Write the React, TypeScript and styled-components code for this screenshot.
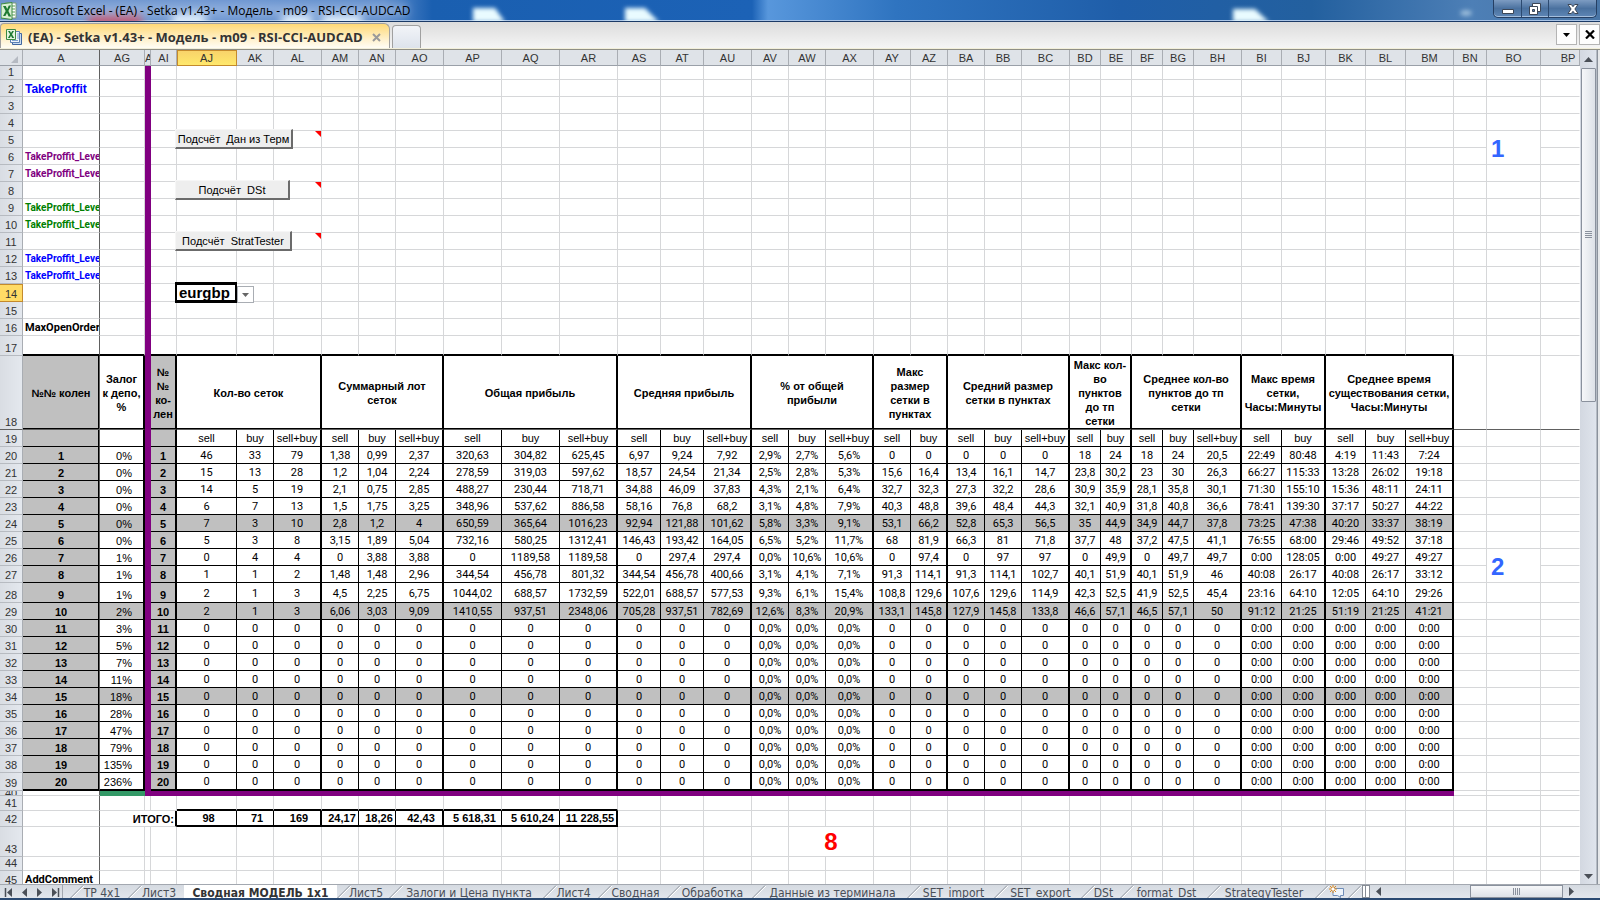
import React from 'react';
import styled, { createGlobalStyle, css } from 'styled-components';

const INK = '#000000';
const GRID = '#d6d7d9';
const GREY = '#c0c0c0';
const PURPLE = '#800080';
const FREEZE = '#606060';
const BLUE = '#0000ff';

const GlobalStyle = createGlobalStyle`
  html, body { margin: 0; height: 100%; overflow: hidden; }
  * { box-sizing: border-box; }
  body { font: 11px/14px "Liberation Sans", Arial, sans-serif; color: #000; background: #fff; }
  button, select { font: inherit; color: inherit; padding: 0; margin: 0; }
`;

const Window = styled.div`
  display: flex;
  flex-direction: column;
  height: 100vh;
  border-bottom: 2px solid #2b4a72;
`;

/* ---------- window title ---------- */

const TitleBar = styled.header`
  position: relative;
  display: flex;
  flex: none;
  align-items: center;
  height: 22px;
  padding: 0 3px 0 1px;
  overflow: hidden;
  border-bottom: 1px solid #1b3a66;
  box-shadow: inset 0 -1px 0 #a9c4e6;
  background: linear-gradient(90deg, #6f95cc 0%, #6b94d0 14%, #5f8dcc 24%, #1a5fb0 27%, #1c62b6 47%,
    #5897dc 48%, #2f74c0 56%, #1f5ea9 70%, #23609f 82%, #4d7fb6 92%, #4875a6 100%);
`;

const Backdrop = styled.svg`
  position: absolute;
  inset: 0;
  width: 100%;
  height: 100%;
`;

const Title = styled.h1`
  position: relative;
  flex: 1;
  margin: 0 0 0 4px;
  font: 400 12px/20px "Open Sans", "Segoe UI", sans-serif;
  white-space: nowrap;
`;

const Logo = styled.svg`
  position: relative;
  flex: none;
`;

const Caption = styled.div`
  position: relative;
  display: flex;
  align-self: flex-start;
  height: 18px;
  border: 1px solid #253f63;
  border-top: 0;
  border-radius: 0 0 5px 5px;
  background: linear-gradient(#7d9cc2, #4a719f 50%, #5e87b6);
  box-shadow: inset 0 -1px 0 #a5bfdd;
`;

const CaptionButton = styled.button<{ $w: number }>`
  display: grid;
  place-items: center;
  width: ${(p) => p.$w}px;
  border: 0;
  border-right: 1px solid #2c4a70;
  background: none;
  &:last-child { border-right: 0; }
`;

/* ---------- document tabs ---------- */

const DocStrip = styled.div`
  display: flex;
  flex: none;
  align-items: flex-end;
  height: 28px;
  padding-bottom: 1px;
  border-bottom: 1px solid #8f8f86;
  background: linear-gradient(#dcdcdc, #f6f6f6);
  box-shadow: inset 0 -1px 0 #f2efda;
`;

const DocTab = styled.div`
  display: flex;
  align-items: center;
  height: 25px;
  width: 390px;
  padding: 2px 0 0 5px;
  border: 1px solid #a0a0a0;
  border-bottom: 0;
  border-radius: 4px 6px 0 0;
  background: linear-gradient(#ffd976, #fff3d4 70%, #fffdf5);
`;

const DocName = styled.span`
  flex: 1;
  margin-left: 6px;
  font: 700 13px/20px "Open Sans", "Segoe UI", sans-serif;
  color: #333;
  white-space: nowrap;
`;

const TabClose = styled.button`
  display: grid;
  place-items: center;
  width: 14px;
  height: 14px;
  margin-right: 6px;
  border: 0;
  background: none;
`;

const BlankTab = styled.button`
  width: 29px;
  height: 23px;
  margin-left: 2px;
  border: 1px solid #a0a0a0;
  border-bottom: 0;
  border-radius: 4px 4px 0 0;
  background: linear-gradient(#f2f4f8, #dde3ec);
`;

const StripTools = styled.div`
  display: flex;
  gap: 2px;
  margin: 0 0 3px auto;
`;

const StripButton = styled.button`
  display: grid;
  place-items: center;
  width: 21px;
  height: 21px;
  border: 1px solid #b4b4b4;
  background: #fdfdfd;
`;

/* ---------- sheet ---------- */

const Body = styled.main`
  display: flex;
  flex: 1;
  min-height: 0;
`;

const SheetPane = styled.div`
  flex: 1;
  min-width: 0;
  overflow: hidden;
`;

const Sheet = styled.table`
  width: 100%;
  table-layout: fixed;
  border-collapse: separate;
  border-spacing: 0;
`;

const Row = styled.tr<{ $h: number }>`
  height: ${(p) => p.$h}px;
  line-height: ${(p) => (p.$h < 15 ? 13 : 14)}px;
`;

const ColHead = styled.th<{ $on?: boolean; $freeze?: boolean; $clip?: boolean; $last?: boolean }>`
  height: 16px;
  padding: 0 0 0 ${(p) => (p.$last ? 16 : 0)}px;
  overflow: hidden;
  font-weight: 400;
  line-height: 14px;
  color: #333;
  text-align: ${(p) => (p.$clip ? 'left' : 'center')};
  white-space: nowrap;
  border-right: 1px solid ${(p) => (p.$freeze ? FREEZE : '#a9adb3')};
  border-bottom: 1px solid #9aa0a8;
  background: #dfe3e8;
  ${(p) =>
    p.$on &&
    css`
      border-color: #c48a2c;
      box-shadow: inset 0 1px 0 #c48a2c, inset 1px 0 0 #c48a2c;
      background: linear-gradient(#f8d26a, #ffe86c);
    `}
`;

const RowHead = styled.th<{ $on?: boolean; $freeze?: boolean }>`
  padding: 0;
  font-weight: 400;
  vertical-align: bottom;
  color: #333;
  border-right: 1px solid #a9adb3;
  border-bottom: 1px solid ${(p) => (p.$freeze ? FREEZE : '#b7bbc1')};
  background: ${(p) => (p.$on ? '#ffdb66' : 'linear-gradient(90deg, #d9dde3, #e4e8ee)')};
  ${(p) => p.$on && css`border-color: #c48a2c; box-shadow: inset 0 1px 0 #c48a2c;`}
`;

const ShortLabel = styled.span`
  display: flex;
  align-items: center;
  justify-content: center;
  height: 4px;
  overflow: hidden;
`;

type Edge = 'grid' | 'thin' | 'thick' | 'none' | 'freeze' | 'purple';

const edge = (e: Edge, fill?: string) =>
  ({
    grid: `1px solid ${GRID}`,
    thin: `1px solid ${INK}`,
    thick: `2px solid ${INK}`,
    none: `1px solid ${fill ?? '#fff'}`,
    freeze: `1px solid ${FREEZE}`,
    purple: `1px solid ${PURPLE}`,
  })[e];

interface CellProps {
  $r?: Edge;
  $b?: Edge;
  $fill?: string;
  $bold?: boolean;
  $align?: string;
  $low?: boolean;
  $color?: string;
  $pad?: string;
  $inner?: string;
  $over?: boolean;
  $note?: boolean;
  $num?: boolean;
}

const Cell = styled.td<CellProps>`
  position: ${(p) => (p.$over || p.$note ? 'relative' : 'static')};
  padding: ${(p) => p.$pad ?? (p.$num ? '2px 0 0' : '0')};
  overflow: ${(p) => (p.$over ? 'visible' : 'hidden')};
  white-space: nowrap;
  font-weight: ${(p) => (p.$bold ? 700 : 400)};
  font-family: ${(p) => (p.$num ? 'Roboto, sans-serif' : 'inherit')};
  text-align: ${(p) => p.$align ?? 'center'};
  vertical-align: ${(p) => (p.$low ? 'bottom' : 'middle')};
  color: ${(p) => p.$color ?? INK};
  background: ${(p) => p.$fill ?? '#fff'};
  border-right: ${(p) => edge(p.$r ?? 'grid', p.$fill)};
  border-bottom: ${(p) => edge(p.$b ?? 'grid', p.$fill)};
  box-shadow: ${(p) => p.$inner ?? 'none'};
  ${(p) =>
    p.$note &&
    css`
      &::after {
        content: '';
        position: absolute;
        top: 0;
        right: 0;
        border-top: 6px solid #f00;
        border-left: 6px solid transparent;
      }
    `}
`;

const ParamName = styled.span<{ $size: number }>`
  display: block;
  font-family: ${(p) => (p.$size === 12 ? 'inherit' : 'Roboto, sans-serif')};
  font-size: ${(p) => p.$size}px;
`;

const BigMark = styled.strong`
  display: block;
  font-size: 24px;
  line-height: 26px;
`;

const SheetButton = styled.button<{ $w: number }>`
  position: absolute;
  z-index: 1;
  top: -2px;
  left: -2px;
  width: ${(p) => p.$w}px;
  height: 20px;
  border: solid;
  border-width: 1px 2px 2px 1px;
  border-color: #f6f6f6 #6b6b6b #6b6b6b #f6f6f6;
  background: #eeeeee;
  white-space: pre;
`;

const Picker = styled.label`
  position: absolute;
  z-index: 1;
  top: -2px;
  left: -2px;
  display: flex;
  align-items: flex-end;
`;

const PickerSelect = styled.select`
  appearance: none;
  width: 62px;
  height: 21px;
  padding: 0 0 0 2px;
  border: 3px solid #000;
  border-width: 3px 2px;
  border-radius: 0;
  outline: 0;
  background: #fff;
  font: 700 15px/15px "Liberation Sans", sans-serif;
`;

const PickerArrow = styled.svg`
  border: 1px solid #a9adb3;
  background: #fff;
`;

/* ---------- scroll bars ---------- */

const VBar = styled.div`
  display: flex;
  flex: none;
  flex-direction: column;
  align-items: center;
  width: 20px;
  padding-right: 4px;
  background: linear-gradient(90deg, #d3d8e1, #dfe4ec 16px, #8b929c 17px, #8b929c 18px, #e6e8ea 18px);
`;

const ScrollArrow = styled.button<{ $w: number; $h: number; $end?: number }>`
  display: grid;
  flex: none;
  place-items: center;
  width: ${(p) => p.$w}px;
  height: ${(p) => p.$h}px;
  margin-right: ${(p) => p.$end ?? 0}px;
  border: 0;
  background: none;
`;

const VThumb = styled.div`
  display: grid;
  place-items: center;
  width: 15px;
  height: 40%;
  border: 1px solid #8a919d;
  border-radius: 1px;
  background: linear-gradient(90deg, #f6f7f9, #dde1e7);
`;

const Track = styled.div`
  flex: 1;
`;

/* ---------- sheet tabs ---------- */

const TabBar = styled.footer`
  display: flex;
  flex: none;
  height: 14px;
  overflow: hidden;
  border-top: 1px solid #a3a8b0;
  background: linear-gradient(#d5dae1, #e2e6ec);
`;

const TabNav = styled.nav`
  display: flex;
  width: 63px;
  padding-left: 2px;
  border-right: 1px solid #a3a8b0;
`;

const TabList = styled.div`
  display: flex;
  padding-left: 7px;
`;

const SheetTab = styled.button<{ $w: number; $on?: boolean }>`
  display: flex;
  flex: none;
  width: ${(p) => p.$w}px;
  height: 13px;
  border: 0;
  overflow: hidden;
  background: ${(p) => (p.$on ? '#fff' : 'none')};
  color: ${(p) => (p.$on ? '#333' : '#4a4f57')};
  font: ${(p) => (p.$on ? 700 : 400)} 12px/16px "DejaVu Sans Condensed", Tahoma, sans-serif;
  white-space: nowrap;
`;

const TabText = styled.span<{ $on: boolean }>`
  flex: 1;
  margin-left: ${(p) => (p.$on ? 0 : -8)}px;
  text-align: center;
`;

const HBar = styled.div`
  display: flex;
  flex: 1;
  align-items: stretch;
`;

const Splitter = styled.span`
  width: 8px;
  border: 1px solid #868c95;
  background: #fff;
  box-shadow: inset 2px 0 0 #fff, inset 3px 0 0 #868c95;
`;

const HThumb = styled.div`
  display: grid;
  place-items: center;
  width: 93px;
  margin-left: auto;
  border: 1px solid #8a919d;
  background: linear-gradient(#f6f7f9, #dde1e7);
`;

/* ---------- data ---------- */

const columns: [string, number][] = [
  ['A', 77], ['AG', 45], ['AH', 6], ['AI', 26],
  ['AJ', 60], ['AK', 37], ['AL', 48], ['AM', 37], ['AN', 37], ['AO', 48],
  ['AP', 58], ['AQ', 58], ['AR', 58], ['AS', 43], ['AT', 43], ['AU', 48],
  ['AV', 37], ['AW', 37], ['AX', 48], ['AY', 37], ['AZ', 37],
  ['BA', 37], ['BB', 37], ['BC', 48], ['BD', 31], ['BE', 31],
  ['BF', 31], ['BG', 31], ['BH', 48], ['BI', 40], ['BJ', 44],
  ['BK', 40], ['BL', 40], ['BM', 48], ['BN', 33], ['BO', 54], ['BP', 0],
];

const groups: { lines: string[]; span: number }[] = [
  { lines: ['Кол-во сеток'], span: 3 },
  { lines: ['Суммарный лот', 'сеток'], span: 3 },
  { lines: ['Общая прибыль'], span: 3 },
  { lines: ['Средняя прибыль'], span: 3 },
  { lines: ['% от общей', 'прибыли'], span: 3 },
  { lines: ['Макс', 'размер', 'сетки в', 'пунктах'], span: 2 },
  { lines: ['Средний размер', 'сетки в пунктах'], span: 3 },
  { lines: ['Макс кол-', 'во', 'пунктов', 'до тп', 'сетки'], span: 2 },
  { lines: ['Среднее кол-во', 'пунктов до тп', 'сетки'], span: 3 },
  { lines: ['Макс время', 'сетки,', 'Часы:Минуты'], span: 2 },
  { lines: ['Среднее время', 'существования сетки,', 'Часы:Минуты'], span: 3 },
];

const sides = groups.flatMap((g) => (g.span === 3 ? ['sell', 'buy', 'sell+buy'] : ['sell', 'buy']));
const groupEnd = groups.flatMap((g) => Array.from({ length: g.span }, (_, i) => i === g.span - 1));

const filled = [
  '46 33 79 1,38 0,99 2,37 320,63 304,82 625,45 6,97 9,24 7,92 2,9% 2,7% 5,6% 0 0 0 0 0 18 24 18 24 20,5 22:49 80:48 4:19 11:43 7:24',
  '15 13 28 1,2 1,04 2,24 278,59 319,03 597,62 18,57 24,54 21,34 2,5% 2,8% 5,3% 15,6 16,4 13,4 16,1 14,7 23,8 30,2 23 30 26,3 66:27 115:33 13:28 26:02 19:18',
  '14 5 19 2,1 0,75 2,85 488,27 230,44 718,71 34,88 46,09 37,83 4,3% 2,1% 6,4% 32,7 32,3 27,3 32,2 28,6 30,9 35,9 28,1 35,8 30,1 71:30 155:10 15:36 48:11 24:11',
  '6 7 13 1,5 1,75 3,25 348,96 537,62 886,58 58,16 76,8 68,2 3,1% 4,8% 7,9% 40,3 48,8 39,6 48,4 44,3 32,1 40,9 31,8 40,8 36,6 78:41 139:30 37:17 50:27 44:22',
  '7 3 10 2,8 1,2 4 650,59 365,64 1016,23 92,94 121,88 101,62 5,8% 3,3% 9,1% 53,1 66,2 52,8 65,3 56,5 35 44,9 34,9 44,7 37,8 73:25 47:38 40:20 33:37 38:19',
  '5 3 8 3,15 1,89 5,04 732,16 580,25 1312,41 146,43 193,42 164,05 6,5% 5,2% 11,7% 68 81,9 66,3 81 71,8 37,7 48 37,2 47,5 41,1 76:55 68:00 29:46 49:52 37:18',
  '0 4 4 0 3,88 3,88 0 1189,58 1189,58 0 297,4 297,4 0,0% 10,6% 10,6% 0 97,4 0 97 97 0 49,9 0 49,7 49,7 0:00 128:05 0:00 49:27 49:27',
  '1 1 2 1,48 1,48 2,96 344,54 456,78 801,32 344,54 456,78 400,66 3,1% 4,1% 7,1% 91,3 114,1 91,3 114,1 102,7 40,1 51,9 40,1 51,9 46 40:08 26:17 40:08 26:17 33:12',
  '2 1 3 4,5 2,25 6,75 1044,02 688,57 1732,59 522,01 688,57 577,53 9,3% 6,1% 15,4% 108,8 129,6 107,6 129,6 114,9 42,3 52,5 41,9 52,5 45,4 23:16 64:10 12:05 64:10 29:26',
  '2 1 3 6,06 3,03 9,09 1410,55 937,51 2348,06 705,28 937,51 782,69 12,6% 8,3% 20,9% 133,1 145,8 127,9 145,8 133,8 46,6 57,1 46,5 57,1 50 91:12 21:25 51:19 21:25 41:21',
];
const blank =
  '0 0 0 0 0 0 0 0 0 0 0 0 0,0% 0,0% 0,0% 0 0 0 0 0 0 0 0 0 0 0:00 0:00 0:00 0:00 0:00';
const deposit = [0, 0, 0, 0, 0, 0, 1, 1, 1, 2, 3, 5, 7, 11, 18, 28, 47, 79, 135, 236];
const levels = deposit.map((d, i) => ({
  no: i + 1,
  deposit: d,
  values: (filled[i] ?? blank).split(' '),
}));
const totals = ['98', '71', '169', '24,17', '18,26', '42,43', '5 618,31', '5 610,24', '11 228,55'];

const params: Record<number, { text: string; color: string; size: number }> = {
  2: { text: 'TakeProffit', color: BLUE, size: 12 },
  6: { text: 'TakeProffit_Leve', color: PURPLE, size: 10 },
  7: { text: 'TakeProffit_Leve', color: PURPLE, size: 10 },
  9: { text: 'TakeProffit_Leve', color: '#008000', size: 10 },
  10: { text: 'TakeProffit_Leve', color: '#008000', size: 10 },
  12: { text: 'TakeProffit_Leve', color: BLUE, size: 10 },
  13: { text: 'TakeProffit_Leve', color: BLUE, size: 10 },
  16: { text: 'MaxOpenOrder', color: INK, size: 11 },
  45: { text: 'AddComment', color: INK, size: 11 },
};
const macros: Record<number, { text: string; w: number }> = {
  5: { text: 'Подсчёт  Дан из Терм', w: 118 },
  8: { text: 'Подсчёт  DSt', w: 115 },
  11: { text: 'Подсчёт  StratTester', w: 117 },
};
const heights: Record<number, number> = {
  1: 14, 14: 18, 17: 20, 18: 74, 28: 20, 39: 18, 40: 5, 41: 15, 42: 15, 43: 30, 44: 14, 45: 17,
};
const heightOf = (n: number) => heights[n] ?? 17;

const sheetTabs: [string, number][] = [
  ['TP 4x1', 58], ['Лист3', 56], ['Сводная МОДЕЛЬ 1x1', 153], ['Лист5', 52],
  ['Залоги и Цена пункта', 154], ['Лист4', 55], ['Сводная', 69], ['Обработка', 85],
  ['Данные из терминала', 155], ['SET_import', 87], ['SET_export', 87], ['DSt', 39],
  ['format_Dst', 87], ['StrategyTester', 108],
];
const ACTIVE = 'Сводная МОДЕЛЬ 1x1';

/* ---------- pieces ---------- */

const Lines = ({ of }: { of: string[] }) => (
  <>
    {of.map((l, i) => (
      <React.Fragment key={i}>
        {i > 0 && <br />}
        {l}
      </React.Fragment>
    ))}
  </>
);

const ExcelLogo = () => (
  <Logo width="16" height="18" viewBox="0 0 16 18" aria-hidden="true">
    <path d="M4 1h11v15H4z" fill="#fff" stroke="#7b9c78" />
    <path d="M10 4h4M10 7h4M10 10h4M10 13h4" stroke="#8fc08a" strokeWidth="1.4" />
    <path d="M0 2l11-1.5v17L0 16z" fill="#d9efd3" stroke="#3d8a43" />
    <path d="M2 4h2.8l1.4 3 1.6-3.4H10L7.4 9l2.8 5.4H7.6L6 11l-1.6 3H2l2.7-5z" fill="#1f7a33" />
  </Logo>
);

const BookLogo = () => (
  <Logo width="16" height="16" viewBox="0 0 16 16" aria-hidden="true">
    <path d="M6.500 4.500h9v11h-9z" fill="#c9dcf2" stroke="#3f66a0" />
    <path d="M4.500 2.500h9v11h-9z" fill="#eef4fb" stroke="#5b7fb4" />
    <path d="M11 5h2M11 7h2M11 9h2M6 11.500h6" stroke="#7fa1cf" />
    <path d="M.5.5h9v10h-9z" fill="#e5f5e0" stroke="#3d8a43" />
    <path d="M2 2h2l1 2 1.200-2H8L6 5.300 8.200 9H6.100L5 6.800 3.800 9H1.900l2.200-3.700z" fill="#1f7a33" />
  </Logo>
);

const Tri = ({ dir, bar, color = '#4a4f57' }: { dir: 'up' | 'down' | 'left' | 'right'; bar?: boolean; color?: string }) => {
  const d = {
    up: 'M1 7h9L5.500 2z',
    down: 'M1 3h9L5.500 8z',
    left: 'M8 0v9L3 4.500z',
    right: 'M3 0v9l5-4.500z',
  }[dir];
  return (
    <svg width="11" height="9" viewBox="0 0 11 9" aria-hidden="true">
      <path d={d} fill={color} />
      {bar && <path d={dir === 'left' ? 'M1.500 0v9' : 'M9.500 0v9'} stroke={color} strokeWidth="1.500" />}
    </svg>
  );
};

const Slash = () => (
  <svg width="14" height="13" viewBox="0 0 14 13" aria-hidden="true">
    <path d="M0 13.500L13 .5" stroke="#8f959e" />
    <path d="M1.500 13.500L14 1" stroke="#fff" />
  </svg>
);

const totalIds = columns.slice(4, 13).map(([id]) => id);

/** Unbordered cells for a slice of the columns, with the controls that float over them. */
const plainCells = (n: number, from: number, to: number) =>
  columns.slice(from, to).map(([id]) => {
    if (id === 'AJ' && macros[n])
      return (
        <Cell key={id} $over>
          <SheetButton type="button" $w={macros[n].w}>{macros[n].text}</SheetButton>
        </Cell>
      );
    if (id === 'AJ' && n === 14)
      return (
        <Cell key={id} $over>
          <Picker>
            <PickerSelect defaultValue="eurgbp" aria-label="Symbol">
              <option>eurgbp</option>
            </PickerSelect>
            <PickerArrow width="17" height="17" viewBox="0 0 15 15" aria-hidden="true">
              <path d="M4 6h7l-3.500 4z" fill="#666" />
            </PickerArrow>
          </Picker>
        </Cell>
      );
    return (
      <Cell
        key={id}
        $note={id === 'AL' && n in macros}
        $b={n === 17 || (n === 41 && totalIds.includes(id)) ? 'thick' : 'grid'}
      />
    );
  });

/** Columns to the right of the table. */
const tail = (n: number) => {
  const b: Edge = n === 18 ? 'freeze' : 'grid';
  const mark = n === 5 ? '1' : n === 26 ? '2' : '';
  return (
    <>
      <Cell $b={b} />
      {mark ? (
        <Cell rowSpan={2} $align="left" $pad="2px 0 0 4px" $color="#3366ff">
          <BigMark>{mark}</BigMark>
        </Cell>
      ) : n === 6 || n === 27 ? null : (
        <Cell $b={b} />
      )}
      <Cell $b={b} $r="none" />
    </>
  );
};

const PlainRow = ({ n }: { n: number }) => {
  const p = params[n];
  const above = n < 18;
  return (
    <Row $h={heightOf(n)}>
      <RowHead scope="row" $on={n === 14}>{n}</RowHead>
      <Cell $r="freeze" $b={n === 17 ? 'thick' : 'grid'} $bold $low $align="left" $pad="0 0 0 2px" $color={p?.color}>
        {p && <ParamName $size={p.size}>{p.text}</ParamName>}
      </Cell>
      {n === 42 ? (
        <Cell colSpan={3} $bold $align="right" $pad="0 1px 0 0" $r="thick">ИТОГО:</Cell>
      ) : (
        <>
          <Cell $b={n === 17 ? 'thick' : 'grid'} />
          {above ? <Cell $fill={PURPLE} $r="purple" $b="purple" /> : <Cell />}
          <Cell $b={n === 17 ? 'thick' : 'grid'} />
        </>
      )}
      {n === 42 ? (
        <>
          {totals.map((t, i) => (
            <Cell key={i} $bold $pad="0 0 0 4px" $b="thick" $r={i % 3 === 2 ? 'thick' : 'thin'}>{t}</Cell>
          ))}
          {plainCells(n, 13, 34)}
        </>
      ) : n === 43 ? (
        <>
          {plainCells(n, 4, 17)}
          <Cell colSpan={2} $color="#ff0000"><BigMark>8</BigMark></Cell>
          {plainCells(n, 19, 34)}
        </>
      ) : (
        plainCells(n, 4, 34)
      )}
      {tail(n)}
    </Row>
  );
};

const GroupRow = () => (
  <Row $h={74}>
    <RowHead scope="row" $freeze>18</RowHead>
    <Cell $fill={GREY} $bold $r="freeze" $b="freeze" $inner={`inset -1px -1px 0 ${INK}`}>№№ колен</Cell>
    <Cell $bold $r="thick" $b="freeze" $inner={`inset 0 -1px 0 ${INK}`}><Lines of={['Залог', 'к депо,', '%']} /></Cell>
    <Cell $fill={PURPLE} $r="purple" $b="purple" />
    <Cell $fill={GREY} $bold $r="thick" $b="freeze" $inner={`inset 0 -1px 0 ${INK}`}><Lines of={['№', '№', 'ко-', 'лен']} /></Cell>
    {groups.map((g) => (
      <Cell key={g.lines.join()} colSpan={g.span} $bold $r="thick" $b="freeze" $inner={`inset 0 -1px 0 ${INK}`}>
        <Lines of={g.lines} />
      </Cell>
    ))}
    {tail(18)}
  </Row>
);

const SideRow = () => (
  <Row $h={17}>
    <RowHead scope="row">19</RowHead>
    <Cell $fill={GREY} $r="freeze" $b="thin" $inner={`inset -1px 0 0 ${INK}`} />
    <Cell $r="thick" $b="thin" />
    <Cell $fill={PURPLE} $r="purple" $b="purple" />
    <Cell $fill={GREY} $r="thick" $b="thin" />
    {sides.map((s, i) => (
      <Cell key={i} $r={groupEnd[i] ? 'thick' : 'thin'} $b="thin">{s}</Cell>
    ))}
    {tail(19)}
  </Row>
);

const LevelRow = ({ level }: { level: (typeof levels)[number] }) => {
  const n = level.no + 19;
  const b: Edge = level.no === 20 ? 'thick' : 'thin';
  const fill = level.no % 5 === 0 && level.no < 20 ? GREY : undefined;
  return (
    <Row $h={heightOf(n)}>
      <RowHead scope="row">{n}</RowHead>
      <Cell $fill={GREY} $bold $low $r="freeze" $b={b} $inner={`inset -1px 0 0 ${INK}`}>{level.no}</Cell>
      <Cell $fill={fill} $low $align="right" $pad="0 11px 0 0" $r="thick" $b={b}>{level.deposit}%</Cell>
      <Cell $fill={PURPLE} $r="purple" $b="purple" />
      <Cell $fill={GREY} $bold $low $r="thick" $b={b}>{level.no}</Cell>
      {level.values.map((v, i) => (
        <Cell key={i} $num $fill={fill} $r={groupEnd[i] ? 'thick' : 'thin'} $b={b}>{v}</Cell>
      ))}
      {tail(n)}
    </Row>
  );
};

const StripeRow = () => (
  <Row $h={5}>
    <RowHead scope="row"><ShortLabel>40</ShortLabel></RowHead>
    <Cell $r="freeze" />
    <Cell $fill="#339966" $r="none" $b="none" />
    <Cell colSpan={32} $fill={PURPLE} $r="purple" $b="purple" />
    {tail(40)}
  </Row>
);

const range = (a: number, b: number) => Array.from({ length: b - a + 1 }, (_, i) => a + i);

export default function App() {
  return (
    <>
      <GlobalStyle />
      <Window>
        <TitleBar>
          <Backdrop aria-hidden="true">
            <defs>
              <filter id="glass" x="-20%" y="-100%" width="140%" height="300%">
                <feGaussianBlur stdDeviation="4" />
              </filter>
              <filter id="edge" x="-20%" y="-50%" width="140%" height="200%">
                <feGaussianBlur stdDeviation="2" />
              </filter>
            </defs>
            <g filter="url(#glass)">
              <path d="M88 14h54v12H88z" fill="#c0506a" />
              <path d="M172 14h34v12h-34zM282 16h30v12h-30zM322 16h40v12h-40z" fill="#e6f4ff" />
              <path d="M18 4h390v12H18z" fill="#a9c3e8" opacity=".55" />
            </g>
            <g filter="url(#edge)" fill="#e9fbff">
              <path d="M473 8h22l10 14h-32zM625 8h20l14 14h-34zM1233 9h22l14 13h-36z" />
              <ellipse cx="1466" cy="13" rx="6" ry="3" opacity=".5" />
            </g>
          </Backdrop>
          <ExcelLogo />
          <Title>Microsoft Excel - (EA) - Setka v1.43+ - Модель - m09 - RSI-CCI-AUDCAD</Title>
          <Caption>
            <CaptionButton $w={28} type="button" aria-label="Minimize">
              <svg width="14" height="12" viewBox="0 0 14 12"><path d="M1.500 6.500h11v4h-11z" fill="#fff" stroke="#3b4656" /></svg>
            </CaptionButton>
            <CaptionButton $w={27} type="button" aria-label="Restore">
              <svg width="14" height="14" viewBox="0 0 14 14">
                <path d="M4.500 1.500h8v8h-8z" fill="#fff" stroke="#3b4656" />
                <path d="M1.500 4.500h8v8h-8z" fill="#fff" stroke="#3b4656" />
                <path d="M4.500 7.500h2v2h-2z" fill="#5a80ad" stroke="#3b4656" />
              </svg>
            </CaptionButton>
            <CaptionButton $w={47} type="button" aria-label="Close">
              <svg width="14" height="12" viewBox="0 0 14 12">
                <path d="M2 1.500h3.300L7 3.700l1.700-2.200H12L8.900 6l3.100 4.500H8.700L7 8.300l-1.700 2.200H2L5.100 6z" fill="#fff" stroke="#3b4656" />
              </svg>
            </CaptionButton>
          </Caption>
        </TitleBar>

        <DocStrip>
          <DocTab>
            <BookLogo />
            <DocName>(EA) - Setka v1.43+ - Модель - m09 - RSI-CCI-AUDCAD</DocName>
            <TabClose type="button" aria-label="Close workbook">
              <svg width="9" height="9" viewBox="0 0 9 9"><path d="M1 1l7 7M8 1L1 8" stroke="#9a9a9a" strokeWidth="2" /></svg>
            </TabClose>
          </DocTab>
          <BlankTab type="button" aria-label="New workbook" />
          <StripTools>
            <StripButton type="button" aria-label="Workbook list">
              <svg width="9" height="6" viewBox="0 0 9 6"><path d="M1 1h7L4.500 5z" fill="#000" /></svg>
            </StripButton>
            <StripButton type="button" aria-label="Close">
              <svg width="10" height="9" viewBox="0 0 10 9"><path d="M1 .5l8 8M9 .5l-8 8" stroke="#000" strokeWidth="2.200" /></svg>
            </StripButton>
          </StripTools>
        </DocStrip>

        <Body>
          <SheetPane>
            <Sheet>
              <colgroup>
                <col style={{ width: 23 }} />
                {columns.map(([id, w]) => (
                  <col key={id} style={w ? { width: w } : undefined} />
                ))}
              </colgroup>
              <thead>
                <tr>
                  <ColHead scope="col">
                    <svg width="22" height="14" viewBox="0 0 22 14" display="block" aria-label="Select all">
                      <path d="M18 5v7h-7z" fill="#b5bac2" />
                    </svg>
                  </ColHead>
                  {columns.map(([id]) => (
                    <ColHead key={id} scope="col" $on={id === 'AJ'} $freeze={id === 'A'} $clip={id === 'AH'} $last={id === 'BP'}>
                      {id}
                    </ColHead>
                  ))}
                </tr>
              </thead>
              <tbody>
                {range(1, 17).map((n) => <PlainRow key={n} n={n} />)}
                <GroupRow />
                <SideRow />
                {levels.map((l) => <LevelRow key={l.no} level={l} />)}
                <StripeRow />
                {range(41, 45).map((n) => <PlainRow key={n} n={n} />)}
              </tbody>
            </Sheet>
          </SheetPane>
          <VBar>
            <ScrollArrow $w={16} $h={18} type="button" aria-label="Scroll up"><Tri dir="up" /></ScrollArrow>
            <VThumb>
              <svg width="7" height="8" viewBox="0 0 7 8"><path d="M0 .5h7M0 2.500h7M0 4.500h7M0 6.500h7" stroke="#8a919d" /></svg>
            </VThumb>
            <Track />
            <ScrollArrow $w={16} $h={18} type="button" aria-label="Scroll down"><Tri dir="down" /></ScrollArrow>
          </VBar>
        </Body>

        <TabBar>
          <TabNav aria-label="Sheet navigation">
            <ScrollArrow $w={15} $h={14} type="button" aria-label="First sheet"><Tri dir="left" bar /></ScrollArrow>
            <ScrollArrow $w={15} $h={14} type="button" aria-label="Previous sheet"><Tri dir="left" /></ScrollArrow>
            <ScrollArrow $w={15} $h={14} type="button" aria-label="Next sheet"><Tri dir="right" /></ScrollArrow>
            <ScrollArrow $w={15} $h={14} type="button" aria-label="Last sheet"><Tri dir="right" bar /></ScrollArrow>
          </TabNav>
          <TabList>
            {sheetTabs.map(([name, w]) => (
              <SheetTab key={name} type="button" $w={w} $on={name === ACTIVE}>
                {name !== ACTIVE && <Slash />}
                <TabText $on={name === ACTIVE}>{name}</TabText>
              </SheetTab>
            ))}
            <SheetTab type="button" $w={33} aria-label="Insert sheet">
              <Slash />
              <svg width="16" height="13" viewBox="0 0 16 13">
                <path d="M4 3.500h10.500v7h-3v2l-3-2H4z" fill="#eef4fb" stroke="#6f8db8" />
                <path d="M4 0v8M0 4h8M1 1l6 6M7 1L1 7" stroke="#e08a1c" />
                <circle cx="4" cy="4" r="1.500" fill="#fff" />
              </svg>
            </SheetTab>
            <Slash />
          </TabList>
          <HBar>
            <Splitter />
            <ScrollArrow $w={16} $h={13} type="button" aria-label="Scroll left"><Tri dir="left" /></ScrollArrow>
            <HThumb>
              <svg width="8" height="7" viewBox="0 0 8 7"><path d="M.5 0v7M2.500 0v7M4.500 0v7M6.500 0v7" stroke="#8a919d" /></svg>
            </HThumb>
            <ScrollArrow $w={17} $h={13} $end={20} type="button" aria-label="Scroll right"><Tri dir="right" /></ScrollArrow>
          </HBar>
        </TabBar>
      </Window>
    </>
  );
}
